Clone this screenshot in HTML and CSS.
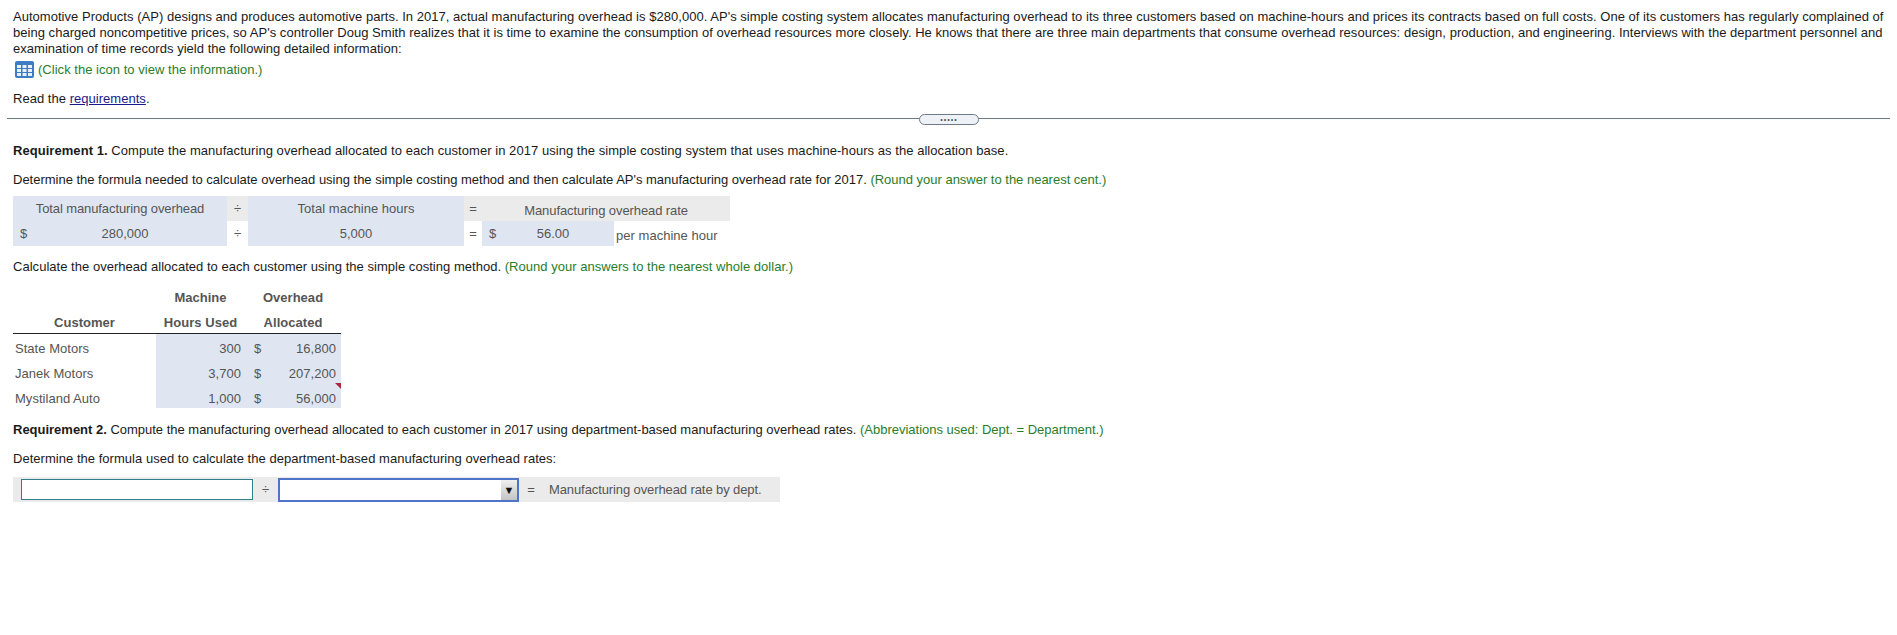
FILE: index.html
```html
<!DOCTYPE html>
<html lang="en">
<head>
    <meta charset="UTF-8">
    <title>Requirement 1 - Manufacturing Overhead</title>
    <link rel="stylesheet" href="styles.css">
</head>
<body>
    <div class="question">
        <p class="intro">Automotive Products (AP) designs and produces automotive parts. In 2017, actual manufacturing overhead is $280,000. AP's simple costing system allocates manufacturing overhead to its three customers based on machine-hours and prices its contracts based on full costs. One of its customers has regularly complained of being charged noncompetitive prices, so AP's controller Doug Smith realizes that it is time to examine the consumption of overhead resources more closely. He knows that there are three main departments that consume overhead resources: design, production, and engineering. Interviews with the department personnel and examination of time records yield the following detailed information:</p>
        <div class="info-row">
            <svg class="grid-icon" width="19" height="17" viewBox="0 0 19 17">
                <rect x="0" y="0" width="19" height="17" rx="2" fill="#3d7cc4"/>
                <g fill="#e8f0fa">
                    <rect x="2" y="4" width="4" height="3"/>
                    <rect x="7.5" y="4" width="4" height="3"/>
                    <rect x="13" y="4" width="4" height="3"/>
                    <rect x="2" y="8" width="4" height="3"/>
                    <rect x="7.5" y="8" width="4" height="3"/>
                    <rect x="13" y="8" width="4" height="3"/>
                    <rect x="2" y="12" width="4" height="3"/>
                    <rect x="7.5" y="12" width="4" height="3"/>
                    <rect x="13" y="12" width="4" height="3"/>
                </g>
            </svg>
            <span class="hint">(Click the icon to view the information.)</span>
        </div>
        <p class="read">Read the <a href="#">requirements</a>.</p>
    </div>

    <div class="divider"><span class="handle">•••••</span></div>

    <div class="answer">
        <p class="req-one"><b>Requirement 1.</b> Compute the manufacturing overhead allocated to each customer in 2017 using the simple costing system that uses machine-hours as the allocation base.</p>
        <p class="line tight">Determine the formula needed to calculate overhead using the simple costing method and then calculate AP's manufacturing overhead rate for 2017. <span class="hint">(Round your answer to the nearest cent.)</span></p>

        <table class="formula">
            <colgroup>
                <col class="f-cur">
                <col class="f-val">
                <col class="f-op">
                <col class="f-wide">
                <col class="f-eq">
                <col class="f-cur-two">
                <col class="f-rate">
                <col class="f-unit">
            </colgroup>
            <tr>
                <td class="blue head-cell" colspan="2">Total manufacturing overhead</td>
                <td class="gray">÷</td>
                <td class="blue">Total machine hours</td>
                <td class="gray">=</td>
                <td class="gray result-head head-cell" colspan="3">Manufacturing overhead rate</td>
            </tr>
            <tr>
                <td class="blue cur">$</td>
                <td class="blue val">280,000</td>
                <td>÷</td>
                <td class="blue">5,000</td>
                <td>=</td>
                <td class="blue cur-two">$</td>
                <td class="blue rate">56.00</td>
                <td class="unit">per machine hour</td>
            </tr>
        </table>

        <p class="line calc">Calculate the overhead allocated to each customer using the simple costing method. <span class="hint">(Round your answers to the nearest whole dollar.)</span></p>

        <table class="alloc">
            <colgroup>
                <col class="a-name">
                <col class="a-hours">
                <col class="a-dollar">
                <col class="a-over">
            </colgroup>
            <tr>
                <th></th>
                <th>Machine</th>
                <th colspan="2">Overhead</th>
            </tr>
            <tr class="head-last">
                <th>Customer</th>
                <th>Hours Used</th>
                <th colspan="2">Allocated</th>
            </tr>
            <tr>
                <td class="name">State Motors</td>
                <td class="blue num hours">300</td>
                <td class="blue dollar">$</td>
                <td class="blue num">16,800</td>
            </tr>
            <tr>
                <td class="name">Janek Motors</td>
                <td class="blue num hours">3,700</td>
                <td class="blue dollar">$</td>
                <td class="blue num">207,200</td>
            </tr>
            <tr>
                <td class="name">Mystiland Auto</td>
                <td class="blue num hours">1,000</td>
                <td class="blue dollar">$</td>
                <td class="blue num flagged">56,000</td>
            </tr>
        </table>

        <p class="line tight req-two"><b>Requirement 2.</b> Compute the manufacturing overhead allocated to each customer in 2017 using department-based manufacturing overhead rates. <span class="hint">(Abbreviations used: Dept. = Department.)</span></p>
        <p class="line">Determine the formula used to calculate the department-based manufacturing overhead rates:</p>

        <div class="dept-row">
            <input class="text-box" type="text">
            <span class="dept-op">÷</span>
            <div class="select-box"><span class="arrow">▼</span></div>
            <span class="dept-eq">=</span>
            <span class="dept-label">Manufacturing overhead rate by dept.</span>
        </div>
    </div>
</body>
</html>
```

FILE: styles.css
```css
body {
    margin: 0;
    background-color: white;
    font-family: "Liberation Sans", Arial, sans-serif;
    font-size: 13px;
    letter-spacing: 0.03px;
    color: #1a1a1a;
}
p {
    margin: 0;
}
.question {
    padding: 9px 6px 0 13px;
}
.intro {
    line-height: 16px;
}
.info-row {
    display: flex;
    align-items: center;
    gap: 4px;
    margin-top: 3px;
    height: 18px;
    padding-left: 2px;
}
.hint {
    color: #2a7d2a;
}
.read {
    margin-top: 13px;
    line-height: 16px;
}
.read a {
    color: #1a1a8c;
}
.divider {
    position: relative;
    margin: 11px 7px 0 7px;
    border-top: 1px solid #6d7b88;
}
.handle {
    position: absolute;
    left: 912px;
    top: -5px;
    width: 58px;
    height: 9px;
    border: 1px solid #6d7b88;
    border-radius: 6px;
    background-color: #eef2f7;
    text-align: center;
    font-size: 7px;
    line-height: 9px;
    letter-spacing: 1px;
    color: #4a5560;
}
.answer {
    padding: 24px 0 0 13px;
}
.req-one, .line {
    line-height: 16px;
}
.req-one {
    letter-spacing: 0.05px;
}
.line {
    margin-top: 13px;
}
.req-two {
    margin-top: 14px;
}
.tight {
    letter-spacing: -0.01px;
}
.formula, .alloc {
    table-layout: fixed;
    border-collapse: collapse;
    color: #555;
}
.formula {
    width: 717px;
    margin-top: 8px;
}
.f-cur { width: 27px; }
.f-val { width: 187px; }
.f-op { width: 21px; }
.f-wide { width: 216px; }
.f-eq { width: 18px; }
.f-cur-two { width: 18px; }
.f-rate { width: 114px; }
.f-unit { width: 116px; }
.formula td {
    box-sizing: border-box;
    height: 25px;
    padding: 0;
    text-align: center;
}
.blue {
    background-color: #dfe6f1;
}
.gray {
    background-color: #ebebeb;
}
.formula .head-cell {
    letter-spacing: -0.1px;
}
.formula .cur {
    padding-left: 7px;
    text-align: left;
}
.formula .val {
    padding-right: 17px;
}
.formula .cur-two {
    padding-left: 7px;
    text-align: left;
}
.formula .rate {
    padding-right: 8px;
}
.formula .unit {
    padding: 4px 0 0 2px;
    text-align: left;
}
.formula .result-head {
    padding-top: 4px;
}
.alloc {
    width: 328px;
    margin-top: 10px;
}
.a-name { width: 143px; }
.a-hours { width: 89px; }
.a-dollar { width: 25px; }
.a-over { width: 71px; }
.alloc th {
    box-sizing: border-box;
    height: 25px;
    padding: 0;
    font-weight: bold;
    text-align: center;
}
.alloc .head-last th {
    height: 23px;
    padding-top: 2px;
    border-bottom: 1px solid #222;
}
.alloc td {
    box-sizing: border-box;
    height: 25px;
    padding: 6px 0 0 0;
}
.alloc .name {
    padding-left: 2px;
}
.alloc .num {
    position: relative;
    padding-right: 5px;
    text-align: right;
}
.alloc .hours {
    padding-right: 4px;
}
.alloc .dollar {
    padding-left: 9px;
}
.flagged::after {
    content: "";
    position: absolute;
    top: 0;
    right: 0;
    border-top: 6px solid #a82a3a;
    border-left: 6px solid transparent;
}
.dept-row {
    display: flex;
    align-items: center;
    margin-top: 10px;
    width: 767px;
    height: 25px;
    background-color: #ebebeb;
    color: #555;
}
.text-box {
    box-sizing: border-box;
    width: 232px;
    height: 21px;
    margin: 0 0 0 8px;
    padding: 0;
    border: 1px solid #2f7f8a;
    background-color: white;
}
.dept-op {
    width: 25px;
    text-align: center;
}
.select-box {
    box-sizing: border-box;
    display: flex;
    justify-content: flex-end;
    width: 241px;
    height: 24px;
    border: 2px solid #4f74c9;
    background-color: white;
}
.arrow {
    width: 16px;
    height: 20px;
    background: linear-gradient(to bottom, #f0f0f0, #c4c4c4);
    color: #111;
    font-size: 11px;
    line-height: 20px;
    text-align: center;
}
.dept-eq {
    width: 22px;
    padding-left: 2px;
    box-sizing: border-box;
    text-align: center;
}
.dept-label {
    margin-left: 8px;
    letter-spacing: -0.1px;
}
```
